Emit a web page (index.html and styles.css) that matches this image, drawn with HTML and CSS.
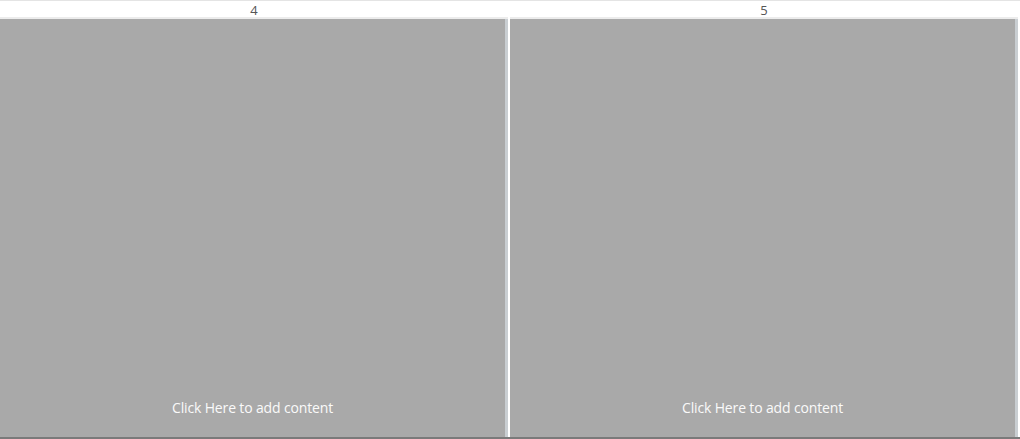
FILE: index.html
```html
<!DOCTYPE html>
<html lang="en">
<head>
  <meta charset="UTF-8">
  <meta name="viewport" content="width=device-width, initial-scale=1.0">
  <title>Layout</title>
  <link rel="stylesheet" href="styles.css">
</head>
<body>
  <div class="board">
    <div class="column">
      <div class="label">4</div>
      <div class="panel">
        <span class="hint">Click Here to add content</span>
      </div>
    </div>
    <div class="column">
      <div class="label">5</div>
      <div class="panel">
        <span class="hint">Click Here to add content</span>
      </div>
    </div>
  </div>
</body>
</html>
```

FILE: styles.css
```css
body {
  margin: 0;
  padding: 0;
  font-family: 'Open Sans', 'Noto Sans', sans-serif;
  background-color: #ffffff;
}
.board {
  display: flex;
  border-top: 1px solid #e4e4e4;
  border-bottom: 2px solid #7a7a7a;
  height: 436px;
}
.column {
  display: flex;
  flex-direction: column;
  width: 510px;
}
.label {
  height: 16px;
  line-height: 19px;
  font-size: 13px;
  color: #555555;
  text-align: center;
  border-bottom: 2px solid #ececec;
  width: 508px;
}
.panel {
  flex: 1;
  display: flex;
  align-items: flex-end;
  justify-content: center;
  background-color: #a9a9a9;
  border-right: 3px solid #c9ced2;
  margin-right: 2px;
  padding-bottom: 21px;
}
.hint {
  color: #fafafa;
  font-size: 14px;
  line-height: 16px;
  letter-spacing: -0.15px;
}
```
